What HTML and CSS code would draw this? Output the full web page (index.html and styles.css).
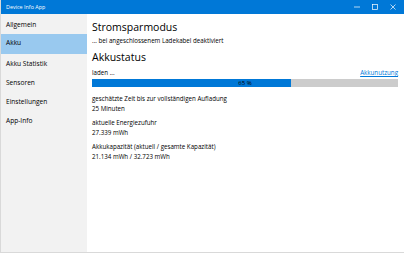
FILE: index.html
```html
<!DOCTYPE html>
<html lang="de">
  <head>
    <meta charset="UTF-8" />
    <meta name="viewport" content="width=device-width, initial-scale=1.0" />
    <link rel="stylesheet" href="styles.css">
    <title>Device Info App</title>
  </head>
  <body>
    <div class="window">
      <div class="titlebar">
        <span class="title">Device Info App</span>
        <div class="controls">
          <svg width="6" height="6" viewBox="0 0 6 6"><line x1="0" y1="3" x2="6" y2="3" stroke="#fff" stroke-width="0.7"/></svg>
          <svg width="6" height="6" viewBox="0 0 6 6"><rect x="0.5" y="0.5" width="5" height="5" fill="none" stroke="#fff" stroke-width="0.7"/></svg>
          <svg width="6" height="6" viewBox="0 0 6 6"><path d="M0.5 0.5 L5.5 5.5 M5.5 0.5 L0.5 5.5" stroke="#fff" stroke-width="0.7"/></svg>
        </div>
      </div>
      <div class="main">
        <div class="sidebar">
          <div class="nav-item">Allgemein</div>
          <div class="nav-item selected">Akku</div>
          <div class="nav-item">Akku Statistik</div>
          <div class="nav-item">Sensoren</div>
          <div class="nav-item">Einstellungen</div>
          <div class="nav-item">App-Info</div>
        </div>
        <div class="content">
          <h2>Stromsparmodus</h2>
          <p class="note">... bei angeschlossenem Ladekabel deaktiviert</p>
          <h2 class="second">Akkustatus</h2>
          <div class="status-row">
            <span>laden ...</span>
            <a href="#">Akkunutzung</a>
          </div>
          <div class="bar">
            <div class="fill" style="width: 65%"></div>
            <span class="bar-label">65 %</span>
          </div>
          <div class="info">
            <div class="label">geschätzte Zeit bis zur vollständigen Aufladung</div>
            <div class="value">25 Minuten</div>
          </div>
          <div class="info">
            <div class="label">aktuelle Energiezufuhr</div>
            <div class="value">27.339 mWh</div>
          </div>
          <div class="info">
            <div class="label">Akkukapazität (aktuell / gesamte Kapazität)</div>
            <div class="value">21.134 mWh / 32.723 mWh</div>
          </div>
        </div>
      </div>
    </div>
  </body>
</html>
```
FILE: styles.css
```css
html, body {
  margin: 0;
  padding: 0;
  width: 404px;
  height: 253px;
  overflow: hidden;
  font-family: "Open Sans", "Noto Sans", sans-serif;
  color: #000;
  background: #fff;
}

.window {
  display: flex;
  flex-direction: column;
  height: 252px;
  border-left: 1px solid #d9d9d9;
  border-bottom: 1px solid #d9d9d9;
}

.titlebar {
  height: 14px;
  background-color: #0078d7;
  color: #fff;
  display: flex;
  align-items: center;
  justify-content: space-between;
  padding-left: 5px;
}

.title {
  font-size: 5.4px;
}

.controls {
  display: flex;
  gap: 12px;
  padding-right: 8px;
}

.controls svg {
  display: block;
}

.main {
  flex: 1;
  display: flex;
}

.sidebar {
  width: 86px;
  background-color: #f2f2f2;
  padding-top: 1px;
}

.nav-item {
  height: 19px;
  line-height: 19px;
  padding-left: 5px;
  font-size: 6.6px;
}

.nav-item.selected {
  background-color: #99c9ef;
  height: 20px;
  line-height: 18px;
}

.content {
  flex: 1;
  padding: 4px 6px 0 5px;
}

h2 {
  font-size: 10.5px;
  font-weight: normal;
  margin: 0;
  line-height: 18px;
}

h2.second {
  margin-top: 3px;
}

.note {
  font-size: 6.2px;
  margin: 0;
  line-height: 9px;
}

.status-row {
  display: flex;
  justify-content: space-between;
  font-size: 6.2px;
  line-height: 10px;
  margin-top: 2px;
}

.status-row a {
  color: #0078d7;
}

.bar {
  position: relative;
  height: 8px;
  background-color: #cccccc;
  margin-top: 1px;
  margin-bottom: 7px;
}

.fill {
  height: 100%;
  background-color: #0078d7;
}

.bar-label {
  position: absolute;
  left: 0;
  right: 0;
  top: 0;
  text-align: center;
  font-size: 6px;
  line-height: 8px;
}

.info {
  font-size: 6.2px;
  line-height: 10px;
  margin-bottom: 4px;
}
```
